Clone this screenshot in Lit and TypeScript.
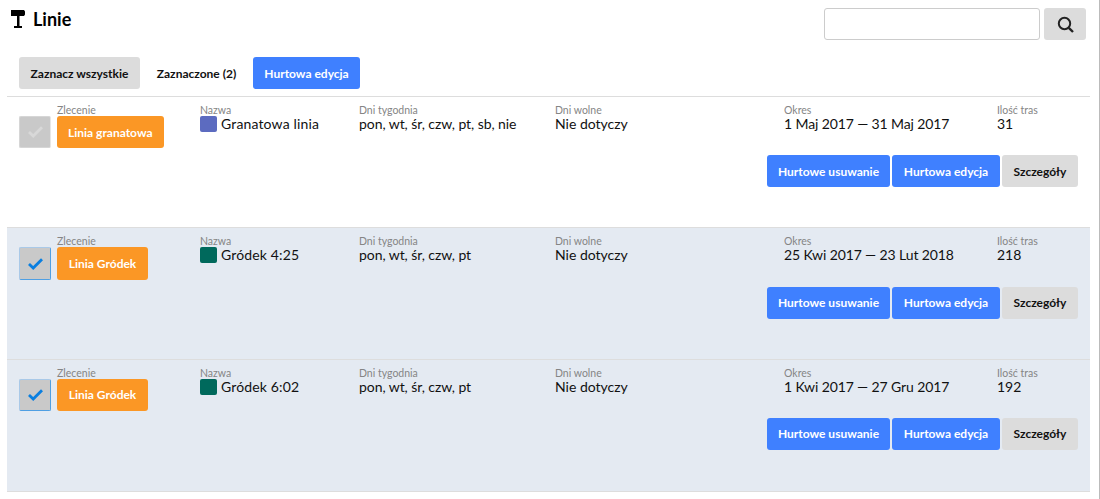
import { LitElement, html, css, svg } from "lit";
import { customElement } from "lit/decorators.js";

interface Row { sel: boolean; order: string; color: string; name: string; days: string; period: string; count: string; }

const rows: Row[] = [
  { sel: false, order: "Linia granatowa", color: "#5c6bc0", name: "Granatowa linia", days: "pon, wt, śr, czw, pt, sb, nie", period: "1 Maj 2017 — 31 Maj 2017", count: "31" },
  { sel: true, order: "Linia Gródek", color: "#00695c", name: "Gródek 4:25", days: "pon, wt, śr, czw, pt", period: "25 Kwi 2017 — 23 Lut 2018", count: "218" },
  { sel: true, order: "Linia Gródek", color: "#00695c", name: "Gródek 6:02", days: "pon, wt, śr, czw, pt", period: "1 Kwi 2017 — 27 Gru 2017", count: "192" },
];

@customElement("app-root")
export class AppRoot extends LitElement {
  static styles = css`
    :host { display: block; width: 1100px; height: 499px; overflow: hidden; background: #fff; font-family: Lato, sans-serif; color: #111; position: relative; }
    .page { padding-left: 7px; }
    .wrap { width: 1083px; }
    .top { display: flex; justify-content: space-between; height: 40px; }
    .title { display: flex; align-items: flex-start; gap: 7px; padding: 9px 0 0 3px; font-size: 18px; font-weight: 700; line-height: 20px; color: #000; }
    .title svg { display: block; }
    .search { display: flex; gap: 4px; padding: 8px 4px 0 0; }
    .search input { width: 216px; height: 32px; box-sizing: border-box; border: 1px solid #ccc; border-radius: 3px; background: #fff; padding: 0; margin: 0; outline: none; }
    .sbtn { width: 42px; height: 32px; border-radius: 3px; background: #dcdcdc; display: flex; align-items: center; justify-content: center; }
    .bulk { display: flex; align-items: center; padding: 17px 0 7px 12px; border-bottom: 1px solid #ddd; height: 32px; }
    .btn { height: 32px; box-sizing: border-box; display: flex; align-items: center; justify-content: center; border-radius: 3px; font-size: 12px; font-weight: 700; white-space: nowrap; }
    .grey { background: #dcdcdc; color: #111; }
    .blue { background: #3f80ff; color: #fff; }
    .plain { color: #111; }
    .bulk .a { width: 121px; }
    .bulk .b { width: 113px; }
    .bulk .c { width: 107px; }
    .row { height: 131.4px; box-sizing: border-box; border-bottom: 1px solid #ddd; padding: 8px 12px 0; }
    .row.sel { background: #e4eaf2; }
    .row:last-child { height: 132.4px; }
    .cols { display: grid; grid-template-columns: 38px 143px 159px 196px 229px 213px 1fr; height: 50.2px; }
    .cell .lab { font-size: 10.5px; line-height: 11px; color: #858585; height: 11px; }
    .cell .val { font-size: 14px; line-height: 16px; color: #111; display: flex; align-items: center; gap: 4px; height: 16px; white-space: nowrap; }
    .cell .name { letter-spacing: 0.15px; }
    .cell .days { letter-spacing: -0.07px; }
    .cell .period { letter-spacing: -0.12px; }
    .swatch { width: 17px; height: 16px; border-radius: 2px; flex: none; }
    .check { width: 32px; height: 32.4px; box-sizing: border-box; margin-top: 11px; background: #c9c9c9; border: 1px solid #d6d6d6; border-right-color: #e6e6e6; border-radius: 2px; display: flex; align-items: center; justify-content: center; }
    .row.sel .check { border-color: #a9c9e8 #4f9fe3 #4f9fe3 #a9c9e8; }
    .order { display: inline-flex; justify-content: center; box-sizing: border-box; min-width: 91px; padding: 0 11px; background: #fb9725; color: #fff; height: 32.4px; align-items: center; border-radius: 3px; font-size: 12px; font-weight: 700; }
    .acts { display: flex; justify-content: flex-end; gap: 2px; }
    .acts .a { width: 123px; }
    .acts .b { width: 108px; }
    .acts .c { width: 76px; }
    .edge { position: absolute; left: 1099px; top: 0; bottom: 0; width: 1px; background: #bbb; }
  `;

  private tick(on: boolean) {
    return svg`<svg width="15" height="12" viewBox="0 0 15 12"><path d="M1 6 L5.2 10 L14 1.2" fill="none" stroke=${on ? "#0a7fe0" : "#d8d8d8"} stroke-width="2.8"/></svg>`;
  }

  render() {
    return html`
      <div class="page"><div class="wrap">
        <div class="top">
          <div class="title">
            <svg width="16" height="20" viewBox="0 0 16 20"><path d="M1 1h13l1 1.5v3L14 7H9.5v10H12v2H4v-2h3V7H1z" fill="#000"/></svg>
            <span>Linie</span>
          </div>
          <div class="search">
            <input type="text" />
            <div class="sbtn"><svg width="17" height="17" viewBox="0 0 17 17"><circle cx="7.5" cy="7.5" r="5.7" fill="none" stroke="#222" stroke-width="2"/><path d="M11.8 11.8 L16 16" stroke="#222" stroke-width="2.4"/></svg></div>
          </div>
        </div>
        <div class="bulk">
          <div class="btn grey a">Zaznacz wszystkie</div>
          <div class="btn plain b">Zaznaczone (2)</div>
          <div class="btn blue c">Hurtowa edycja</div>
        </div>
        ${rows.map((r) => html`
          <div class="row ${r.sel ? "sel" : ""}">
            <div class="cols">
              <div><div class="check">${this.tick(r.sel)}</div></div>
              <div class="cell"><div class="lab">Zlecenie</div><div class="order">${r.order}</div></div>
              <div class="cell"><div class="lab">Nazwa</div><div class="val name"><span class="swatch" style="background:${r.color}"></span>${r.name}</div></div>
              <div class="cell"><div class="lab">Dni tygodnia</div><div class="val days">${r.days}</div></div>
              <div class="cell"><div class="lab">Dni wolne</div><div class="val">Nie dotyczy</div></div>
              <div class="cell"><div class="lab">Okres</div><div class="val period">${r.period}</div></div>
              <div class="cell"><div class="lab">Ilość tras</div><div class="val">${r.count}</div></div>
            </div>
            <div class="acts">
              <div class="btn blue a">Hurtowe usuwanie</div>
              <div class="btn blue b">Hurtowa edycja</div>
              <div class="btn grey c">Szczegóły</div>
            </div>
          </div>`)}
      </div></div>
      <div class="edge"></div>
    `;
  }
}
